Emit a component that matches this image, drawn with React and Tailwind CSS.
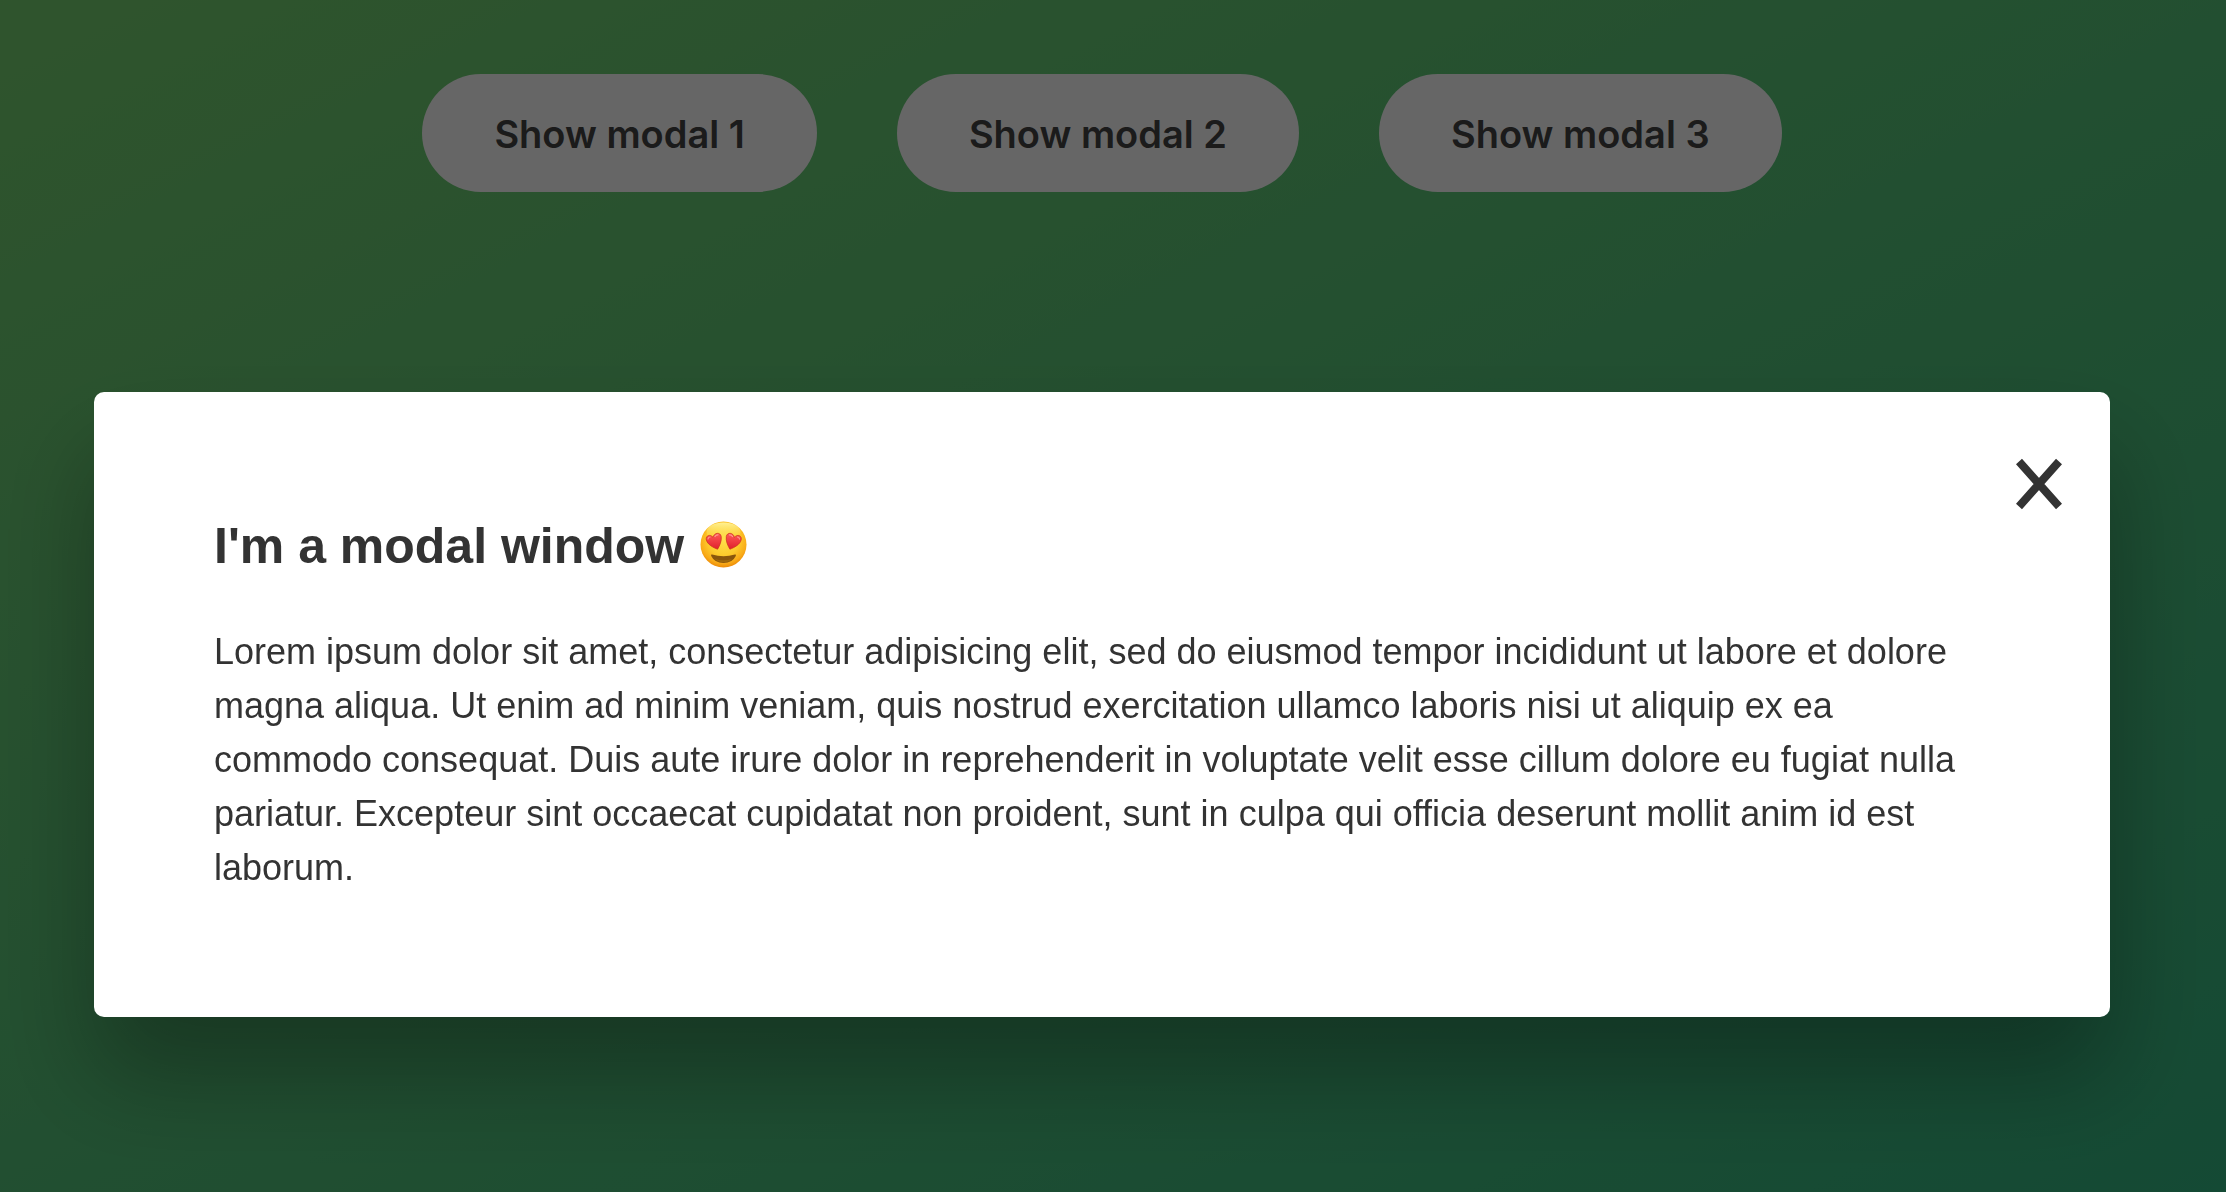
import React, { useState } from "react";

const modals = ["Show modal 1", "Show modal 2", "Show modal 3"];

function HeartEyes() {
  return (
    <svg role="img" aria-label="smiling face with heart eyes" viewBox="0 0 47 47" className="mb-1 size-[47px] shrink-0">
      <defs>
        <radialGradient id="face" cx="50%" cy="40%" r="62%">
          <stop offset="0" stopColor="#ffe04a" />
          <stop offset="0.55" stopColor="#fdca2c" />
          <stop offset="0.82" stopColor="#f9ab18" />
          <stop offset="1" stopColor="#ea8304" />
        </radialGradient>
        <linearGradient id="shine" x1="0" y1="0" x2="0" y2="1">
          <stop offset="0" stopColor="#fff6a0" stopOpacity="0.9" />
          <stop offset="1" stopColor="#ffe04a" stopOpacity="0" />
        </linearGradient>
        <linearGradient id="heart" x1="0" y1="0" x2="0" y2="1">
          <stop offset="0" stopColor="#ff5a56" />
          <stop offset="1" stopColor="#e0202e" />
        </linearGradient>
      </defs>
      <circle cx="23.5" cy="23.5" r="23" fill="url(#face)" />
      <ellipse cx="23.5" cy="11" rx="17" ry="9.5" fill="url(#shine)" />
      <path d="M12 33.6 Q23.5 37 35 33.6 Q36.4 33.4 35.8 35 Q32.4 42 23.5 42 Q14.6 42 11.2 35 Q10.6 33.4 12 33.6Z" fill="#8a560c" />
      <path d="M15 38 Q23.5 40.5 32 38 Q28.5 41.3 23.5 41.3 Q18.5 41.3 15 38Z" fill="#a0690c" />
      <path
        id="eye"
        d="M17.6 28.2 C13.5 26.8 7.2 23.4 6.3 18.8 C5.4 14.6 10.2 12.7 13 16.3 C14.3 11.4 20.4 10.9 21.2 15.5 C21.9 19.7 19.7 24.8 17.6 28.2Z"
        fill="url(#heart)"
        stroke="#c9301c"
        strokeWidth="0.7"
      />
      <use href="#eye" transform="translate(47.5 0) scale(-1 1)" />
      <path d="M8 18 Q8.2 16 10 16 M15 15.5 Q16 13.7 18 13.8 M39.5 18 Q39.3 16 37.5 16 M32.5 15.5 Q31.5 13.7 29.5 13.8" fill="none" stroke="#ff9c92" strokeWidth="1.2" strokeLinecap="round" />
    </svg>
  );
}

function Modal({ onClose }) {
  return (
    <div className="fixed inset-0 flex items-center bg-black/60 pt-[217px] pr-[116px] pl-[94px]">
      <section
        role="dialog"
        aria-modal="true"
        aria-labelledby="modal-title"
        className="relative w-full rounded-[10px] bg-white px-[120px] pt-[117px] pb-[122px] shadow-[0_60px_100px_rgba(0,0,0,0.3)]"
      >
        <button type="button" aria-label="Close" onClick={onClose} className="absolute top-[66px] right-12 cursor-pointer">
          <svg viewBox="0 0 46 52" className="h-[52px] w-[46px]" stroke="#333333" strokeWidth="8" aria-hidden="true">
            <path d="M3 3.5 43 48.5M43 3.5 3 48.5" />
          </svg>
        </button>
        <h1 id="modal-title" className="mb-[41px] flex items-center gap-4 text-[50px] leading-[75px] font-bold">
          I'm a modal window
          <HeartEyes />
        </h1>
        <p className="text-[36px] leading-[54px]">
          Lorem ipsum dolor sit amet, consectetur adipisicing elit, sed do eiusmod tempor incididunt ut labore et
          dolore magna aliqua. Ut enim ad minim veniam, quis nostrud exercitation ullamco laboris nisi ut aliquip ex
          ea commodo consequat. Duis aute irure dolor in reprehenderit in voluptate velit esse cillum dolore eu fugiat
          nulla pariatur. Excepteur sint occaecat cupidatat non proident, sunt in culpa qui officia deserunt mollit
          anim id est laborum.
        </p>
      </section>
    </div>
  );
}

export default function App() {
  const [open, setOpen] = useState(true);
  return (
    <div className="min-h-screen bg-[linear-gradient(to_top_left,#28b487,#7dd56f)] bg-[length:129.4%_122.6%] bg-[position:51.7%_9.7%] font-['Liberation_Sans',Arial,sans-serif] text-[#333333]">
      <main className="flex justify-center gap-20 pt-[74px] pr-[22px]">
        {modals.map((label) => (
          <button
            key={label}
            type="button"
            onClick={() => setOpen(true)}
            className="h-[118px] cursor-pointer rounded-full bg-white px-[72px] pt-0.5 font-['Inter',sans-serif] text-[38px] font-semibold text-[#444444]"
          >
            {label}
          </button>
        ))}
      </main>
      {open && <Modal onClose={() => setOpen(false)} />}
    </div>
  );
}
